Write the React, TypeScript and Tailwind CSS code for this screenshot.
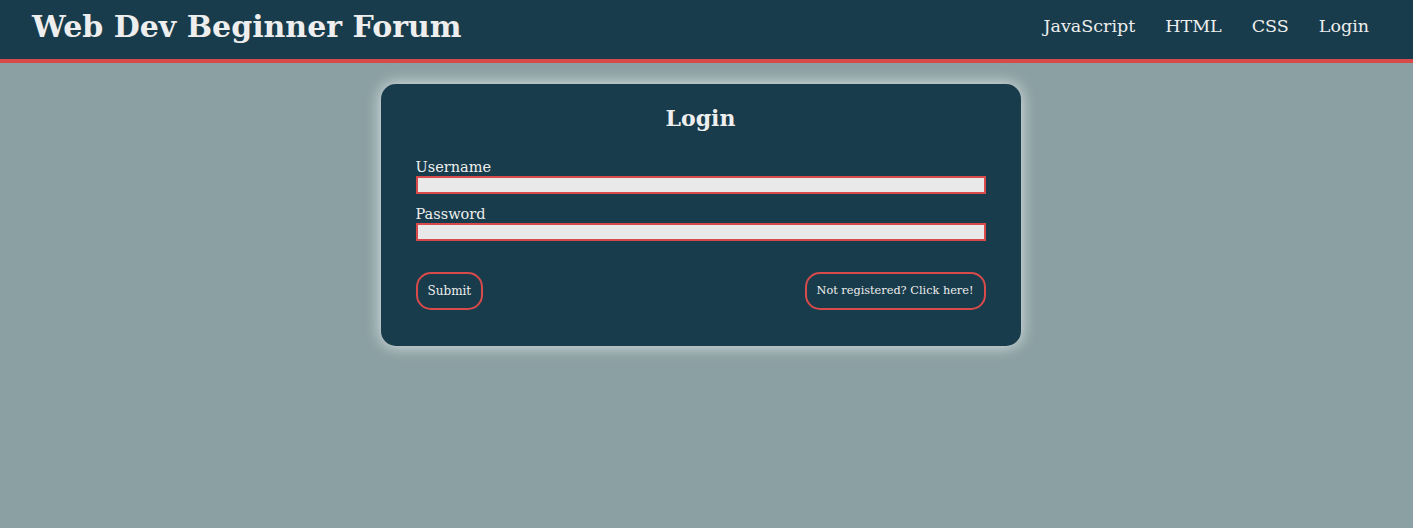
const links = ["JavaScript", "HTML", "CSS", "Login"];

const Field = ({ label, type }: { label: string; type: string }) => (
  <label className="flex flex-col">
    <span className="text-[14.5px] leading-[18px]">{label}</span>
    <input
      type={type}
      className="h-[18px] w-full border-2 border-[#d94b4b] bg-[#e9e9e9] text-black outline-none"
    />
  </label>
);

export default function App() {
  return (
    <div className="min-h-[528px] bg-[#8ba0a3] font-['DejaVu_Serif',Georgia,serif] text-[#eeeeee]">
      <header className="bg-[#183c4b]">
        <div className="flex h-[59px] items-center justify-between pb-[6px] pl-8 pr-11">
          <h1 className="text-[30px] font-bold leading-none">Web Dev Beginner Forum</h1>
          <nav className="flex gap-[30px] text-[17.5px]">
            {links.map((l) => (
              <a key={l} href="#">
                {l}
              </a>
            ))}
          </nav>
        </div>
        <div className="h-[4px] bg-[#d94b4b]" />
      </header>

      <main className="flex justify-center pr-[12px] pt-[21px]">
        <section className="flex h-[262px] w-[640px] flex-col rounded-[15px] bg-[#183c4b] px-[35px] pt-[20px] shadow-[0_0_16px_rgba(255,255,255,0.75)]">
          <h2 className="text-center text-[22px] font-bold leading-[28px]">Login</h2>
          <form className="mt-[26px] flex flex-col gap-[11px]">
            <Field label="Username" type="text" />
            <Field label="Password" type="password" />
          </form>
          <div className="mt-[31px] flex justify-between">
            <button className="h-[38px] rounded-[15px] border-2 border-[#d94b4b] px-[10px] text-[12px]">
              Submit
            </button>
            <button className="h-[38px] rounded-[15px] border-2 border-[#d94b4b] px-[10px] text-[11.3px]">
              Not registered? Click here!
            </button>
          </div>
        </section>
      </main>
    </div>
  );
}
